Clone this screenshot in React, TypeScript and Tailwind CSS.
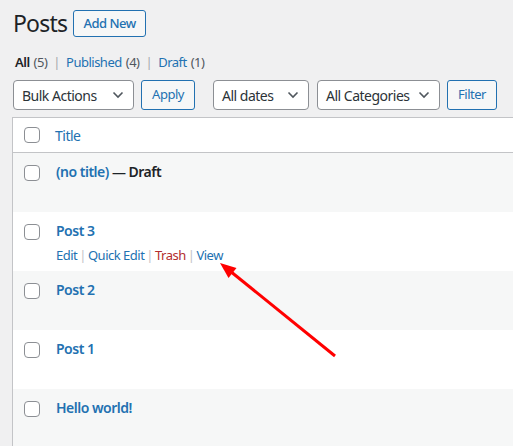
import React from "react";

const posts = [
  { title: "(no title)", state: "Draft" },
  { title: "Post 3", actions: true },
  { title: "Post 2" },
  { title: "Post 1" },
  { title: "Hello world!" },
];

function Checkbox() {
  return <span className="block h-4 w-4 shrink-0 rounded-[4px] border border-[#8c8f94] bg-white" />;
}

function Chevron() {
  return (
    <svg width="12" height="8" viewBox="0 0 12 8" fill="none" className="shrink-0">
      <path d="M1.5 1.5 6 6l4.5-4.5" stroke="#50575e" strokeWidth="1.6" />
    </svg>
  );
}

function Select({ label, width }: { label: string; width: string }) {
  return (
    <div className={`flex h-[30px] items-center justify-between rounded-[4px] border border-[#8c8f94] bg-white pl-[8px] pr-[9px] text-[14px] text-[#2c3338] ${width}`}>
      <span>{label}</span>
      <Chevron />
    </div>
  );
}

function Button({ label, width }: { label: string; width: string }) {
  return (
    <div className={`flex h-[30px] items-center justify-center rounded-[3px] border border-[#2271b1] bg-[#f6f7f7] text-[13px] text-[#2271b1] ${width}`}>
      {label}
    </div>
  );
}

export default function App() {
  return (
    <div className="relative h-[446px] w-[513px] overflow-hidden bg-[#f0f0f1] font-['Noto_Sans',sans-serif] tracking-[-0.5px] text-[#1d2327]">
      <div className="pl-[13px] pt-[10px]">
        <div className="flex h-[27px] items-center gap-[6px]">
          <h1 className="text-[23px] leading-none font-normal tracking-[-0.8px] text-[#1d2327]">Posts</h1>
          <div className="flex h-[27px] w-[73px] items-center justify-center rounded-[3px] border border-[#2271b1] bg-[#f6f7f7] text-[13px] font-medium text-[#2271b1]">
            Add New
          </div>
        </div>

        <div className="mt-[15px] flex h-[20px] items-center text-[13px] leading-[20px]">
          <span className="pl-[2px] font-semibold text-[#1d2327]">All</span>
          <span className="ml-[4px] text-[#50575e]">(5)</span>
          <span className="mx-[6px] text-[#a7aaad]">|</span>
          <span className="text-[#2271b1]">Published</span>
          <span className="ml-[4px] text-[#50575e]">(4)</span>
          <span className="mx-[6px] text-[#a7aaad]">|</span>
          <span className="text-[#2271b1]">Draft</span>
          <span className="ml-[4px] text-[#50575e]">(1)</span>
        </div>

        <div className="mt-[8px] flex items-center">
          <Select label="Bulk Actions" width="w-[121px]" />
          <div className="ml-[7px]">
            <Button label="Apply" width="w-[54px]" />
          </div>
          <div className="ml-[18px]">
            <Select label="All dates" width="w-[96px]" />
          </div>
          <div className="ml-[8px]">
            <Select label="All Categories" width="w-[123px]" />
          </div>
          <div className="ml-[7px]">
            <Button label="Filter" width="w-[50px]" />
          </div>
        </div>
      </div>

      <div className="ml-[12px] mt-[7px] w-[520px] border border-[#c3c4c7] bg-white">
        <div className="flex h-[35px] items-center border-b border-[#c3c4c7] pl-[11px]">
          <Checkbox />
          <span className="ml-[15px] text-[14px] text-[#2271b1]">Title</span>
        </div>
        {posts.map((p, i) => (
          <div key={p.title} className={`flex h-[59px] items-start pl-[11px] pt-[9px] ${i % 2 === 0 ? "bg-[#f6f7f7]" : "bg-white"}`}>
            <div className="mt-[3px]">
              <Checkbox />
            </div>
            <div className="ml-[16px]">
              <div className="text-[14px] leading-[20px] font-semibold">
                <span className="text-[#2271b1]">{p.title}</span>
                {p.state && <span className="text-[#1d2327]"> — {p.state}</span>}
              </div>
              {p.actions && (
                <div className="mt-[4px] flex text-[13px] leading-[20px]">
                  <span className="text-[#2271b1]">Edit</span>
                  <span className="mx-[2px] text-[#c3c4c7]">|</span>
                  <span className="text-[#2271b1]">Quick Edit</span>
                  <span className="mx-[2px] text-[#c3c4c7]">|</span>
                  <span className="text-[#b32d2e]">Trash</span>
                  <span className="mx-[2px] text-[#c3c4c7]">|</span>
                  <span className="text-[#2271b1]">View</span>
                </div>
              )}
            </div>
          </div>
        ))}
      </div>

      <svg className="pointer-events-none absolute left-0 top-0" width="513" height="446">
        <line x1="335" y1="356" x2="230" y2="271" stroke="#ff0000" strokeWidth="3" />
        <polygon points="220,263 236.5,268 228.5,278" fill="#ff0000" />
      </svg>
    </div>
  );
}
